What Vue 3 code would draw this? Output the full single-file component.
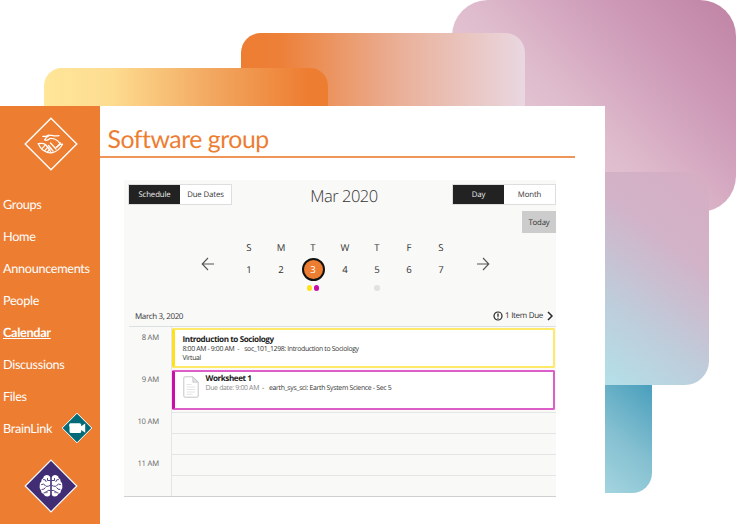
<script setup>
const navigation = [
  { label: 'Groups' },
  { label: 'Home' },
  { label: 'Announcements' },
  { label: 'People' },
  { label: 'Calendar', active: true },
  { label: 'Discussions' },
  { label: 'Files' },
  { label: 'BrainLink', video: true },
]

const week = [
  { name: 'S', date: 1 },
  { name: 'M', date: 2 },
  { name: 'T', date: 3, selected: true, dots: ['yellow', 'magenta'] },
  { name: 'W', date: 4 },
  { name: 'T', date: 5, dots: ['grey'] },
  { name: 'F', date: 6 },
  { name: 'S', date: 7 },
]

const hours = ['8 AM', '9 AM', '10 AM', '11 AM']
</script>

<template>
  <div class="scene">
    <div class="tile tile-pink"></div>
    <div class="tile tile-orange"></div>
    <div class="tile tile-yellow"></div>
    <div class="tile tile-teal"></div>
    <div class="tile tile-blue"></div>

    <div class="window">
      <aside class="sidebar">
        <svg class="logo" viewBox="0 0 54 54" width="54" height="54">
          <path d="M27 1.2 52.8 27 27 52.8 1.2 27Z" fill="none" stroke="#fff" stroke-width="1.4" />
          <g fill="none" stroke="#fff" stroke-width="1.25" stroke-linecap="round" stroke-linejoin="round">
            <path d="M18.8 19.3h3.4q2-1.3 4-1h1.6q3.5 1 7.2.3" />
            <path d="M25 18.7q-2.8 1-4.4 4.2 2.4 1.2 5.4-1.4 4.5-.4 8 2.6 1.8 1.7 2 3.3" />
            <path d="M14.3 26.7q1.5 3.5 4 6 5 3.6 9.5 3.1 6.8-1.4 10.8-8.6l-2.6.2-4 3" />
            <path d="M14.3 26.7q5-.7 7.2.8l3.2 4 2.3 4M26.5 26l5.5 6M24.5 28.5l4.5 5.5" />
            <path d="M18 31.7l3-3.4M20.7 33.7l3-3.3M23.4 35l2.6-3M33 30l3.5-4" />
          </g>
        </svg>

        <nav class="nav">
          <a v-for="item in navigation" :key="item.label" class="nav-item" :class="{ active: item.active }">
            <span>{{ item.label }}</span>
            <svg v-if="item.video" class="video" viewBox="0 0 32 32" width="32" height="32">
              <path d="M16 1.2 30.8 16 16 30.8 1.2 16Z" fill="#036b77" stroke="#fff" stroke-width="1" />
              <path d="M9.5 11.2H18.6q1.6 0 1.6 1.6V14.2l4-2.6v9.2L20.2 18v1.6q0 1.5-1.6 1.5H10q-1.5 0-1.5-1.5v-4.5q-1-2 0-3.3Z" fill="#fff" />
            </svg>
          </a>
        </nav>

        <svg class="brain" viewBox="0 0 54 54" width="54" height="54">
          <path d="M27 1.2 52.8 27 27 52.8 1.2 27Z" fill="#412d74" stroke="#fff" stroke-width="1.2" />
          <path d="M26.2 18q-1.5-2.5-4.5-1.8-2.4.6-2.4 2.7-2.3 1-2 3.7-2 1.5-1.6 4.2-.8 3 1.3 4.6 0 2.7 2.4 3.4 1.2 3 4.2 2.7 2.3 0 2.6-2Z" fill="#fff" />
          <path d="M27.8 18q1.5-2.5 4.5-1.8 2.4.6 2.4 2.7 2.3 1 2 3.7 2 1.5 1.6 4.2.8 3-1.3 4.6 0 2.7-2.4 3.4-1.2 3-4.2 2.7-2.3 0-2.6-2Z" fill="#fff" />
          <g fill="none" stroke="#412d74" stroke-width=".9" stroke-linecap="round">
            <path d="M19.5 20.5q2.5-.5 2.7 2M26 21.5h-2.5v-2M17.5 25.5q2.5-1.3 3.6.8t4.9.2M18 30.5q2.5.4 3.3-1.7M26 31.5q-3.3-1-3.2 2.3M20 34q2 .3 2.3-1.5" />
            <path d="M34.5 20.5q-2.5-.5-2.7 2M28 21.5h2.5v-2M36.5 25.5q-2.5-1.3-3.6.8t-4.9.2M36 30.5q-2.5.4-3.3-1.7M28 31.5q3.3-1 3.2 2.3M34 34q-2 .3-2.3-1.5" />
          </g>
        </svg>
      </aside>

      <main class="content">
        <h1 class="title">Software group</h1>

        <section class="calendar">
          <header class="toolbar">
            <div class="toggle">
              <button class="on">Schedule</button>
              <button>Due Dates</button>
            </div>
            <h2 class="month">Mar 2020</h2>
            <div class="toggle">
              <button class="on">Day</button>
              <button>Month</button>
            </div>
          </header>
          <button class="today">Today</button>

          <div class="week">
            <svg class="arrow" viewBox="0 0 14 14" width="14" height="14">
              <path d="M13 7H1.2M7 1 1.2 7 7 13" />
            </svg>
            <div class="days">
              <div v-for="day in week" :key="day.date" class="day">
                <span class="name">{{ day.name }}</span>
                <span class="date" :class="{ selected: day.selected }">{{ day.date }}</span>
                <span class="dots">
                  <i v-for="dot in day.dots" :key="dot" :class="dot"></i>
                </span>
              </div>
            </div>
            <svg class="arrow" viewBox="0 0 14 14" width="14" height="14">
              <path d="M1 7h11.8M7 1l5.8 6L7 13" />
            </svg>
          </div>

          <div class="summary">
            <span class="current">March 3, 2020</span>
            <span class="due">
              <svg viewBox="0 0 10 10" width="10" height="10">
                <circle cx="5" cy="5" r="4" fill="none" stroke="#262626" stroke-width="1.2" />
                <path d="M5 2.4v3.3M5 6.7v1" stroke="#262626" stroke-width="1.3" />
              </svg>
              <span class="due-text">1 Item Due</span>
              <svg viewBox="0 0 6 10" width="6" height="10">
                <path d="M1 1l4 4-4 4" fill="none" stroke="#262626" stroke-width="1.5" />
              </svg>
            </span>
          </div>

          <div class="schedule">
            <div class="hours">
              <div v-for="hour in hours" :key="hour" class="hour">{{ hour }}</div>
            </div>
            <div class="events">
              <article class="event sociology">
                <h3>Introduction to Sociology</h3>
                <p><span class="time">8:00 AM - 9:00 AM</span><span class="dash">-</span><span class="course">soc_101_1298: Introduction to Sociology</span></p>
                <p class="place">Virtual</p>
              </article>
              <article class="event worksheet">
                <svg class="paper" viewBox="0 0 16 22" width="16" height="22">
                  <path d="M.8 2q0-1.2 1.2-1.2h8L15.2 6v14q0 1.2-1.2 1.2H2Q.8 21.2.8 20Z" fill="#fff" stroke="#c6c6c6" />
                  <path d="M9.8 1v5.2h5.2Z" fill="#e4e4e4" stroke="#c6c6c6" stroke-width=".8" />
                  <path d="M3.5 8.5h5M3.5 11h8.5M3.5 13.5h8.5M3.5 16h8.5M3.5 18.3h6" stroke="#dedede" stroke-width=".8" />
                </svg>
                <div>
                  <h3>Worksheet 1</h3>
                  <p><span class="muted">Due date: 9:00 AM</span><span class="dash">-</span><span class="course">earth_sys_sci: Earth System Science - Sec 5</span></p>
                </div>
              </article>
              <div class="slot"></div>
              <div class="slot"></div>
              <div class="slot"></div>
              <div class="slot"></div>
            </div>
          </div>
        </section>
      </main>
    </div>
  </div>
</template>

<style>
body {
  background: #fff;
  overflow: hidden;
}
</style>

<style scoped>
* {
  box-sizing: border-box;
}

.scene {
  position: relative;
  width: 736px;
  height: 524px;
  padding-top: 106px;
  overflow: hidden;
  font-family: "Open Sans", "Noto Sans", sans-serif;
  text-rendering: geometricPrecision;
  color: #333;
}

h1, h2, h3, p {
  margin: 0;
}

button {
  margin: 0;
  padding: 0;
  border: 0;
  font-family: inherit;
  text-rendering: inherit;
}

/* Overlapping backdrop tiles */
.tile {
  position: absolute;
}

.tile-pink {
  left: 452px;
  top: 0;
  width: 284px;
  height: 212px;
  border-radius: 36px;
  background: linear-gradient(45deg, #edd5df 0%, #dfbccd 45%, #cd99b7 74%, #c083a4 100%);
}

.tile-orange {
  left: 241px;
  top: 33px;
  width: 284px;
  height: 100px;
  border-radius: 20px;
  background: linear-gradient(90deg, #ed7d31 0%, #ed8038 14%, #eab19a 57%, #e9d7e1 100%);
}

.tile-yellow {
  left: 44px;
  top: 68px;
  width: 284px;
  height: 80px;
  border-radius: 18px;
  background: linear-gradient(90deg, #ffe699 0%, #fddc90 24%, #f2a65f 60%, #ed7d31 93%);
}

.tile-teal {
  left: 600px;
  top: 380px;
  width: 51.5px;
  height: 113px;
  border-radius: 0 0 20px 0;
  background: linear-gradient(40deg, #a6d6e0 0%, #85c0d1 45%, #4ba0bd 95%);
}

.tile-blue {
  left: 600px;
  top: 172px;
  width: 108.5px;
  height: 213px;
  border-radius: 0 24px 24px 0;
  background: linear-gradient(38deg, #b2e1e9 0%, #bfccda 32%, #d2b3c8 66%, #d6adc3 100%);
}

.window {
  position: relative;
  display: flex;
  width: 605px;
  height: 418px;
  background: #fff;
}

/* Sidebar */
.sidebar {
  display: flex;
  flex-direction: column;
  width: 99.5px;
  padding-top: 11px;
  background: #ed7d31;
}

.logo,
.brain {
  display: block;
  flex: none;
  margin-left: 24px;
}

.nav {
  display: flex;
  flex-direction: column;
  height: 256px;
  margin-top: 17px;
  font-family: Lato, sans-serif;
  font-size: 12.7px;
  letter-spacing: -0.32px;
  color: #fff;
}

.nav-item {
  display: flex;
  flex: none;
  align-items: center;
  height: 32px;
  padding-left: 3px;
}

.active {
  font-weight: 700;
  text-decoration: underline;
}

.video {
  margin-left: 9px;
}

.brain {
  margin-top: 15px;
}

/* Main area */
.content {
  flex: 1;
  min-width: 0;
}

.title {
  width: 475.5px;
  height: 51.5px;
  padding: 18.5px 0 0 8px;
  border-bottom: 2px solid #f0955a;
  font-family: Lato, sans-serif;
  font-size: 24.8px;
  font-weight: 400;
  letter-spacing: -0.45px;
  line-height: 30px;
  color: #ed7d31;
}

.calendar {
  display: flex;
  flex-direction: column;
  width: 432px;
  height: 316.5px;
  margin: 22.5px 0 0 24.5px;
  padding-top: 3.5px;
  border-bottom: 1.5px solid #cfcfcf;
  background: #f9f9f8;
}

.toolbar {
  display: flex;
  align-items: center;
  justify-content: space-between;
  height: 21px;
  padding-left: 4px;
}

.toggle {
  display: flex;
  width: 104px;
  height: 21px;
  border: 1px solid #dedede;
}

.toggle button {
  flex: 1;
  padding-top: 1.5px;
  background: #fff;
  font-size: 7.8px;
  letter-spacing: -0.12px;
  color: #333;
}

.toggle .on {
  background: #222;
  color: #eee;
}

.month {
  padding-top: 4.5px;
  padding-left: 4px;
  font-size: 16.5px;
  font-weight: 300;
  letter-spacing: -0.5px;
  line-height: 22px;
  color: #333;
}

.today {
  align-self: flex-end;
  width: 34px;
  height: 22px;
  margin-top: 6.5px;
  padding-top: 1px;
  background: #ccc;
  font-size: 7.8px;
  letter-spacing: -0.15px;
  color: #333;
}

.week {
  display: flex;
  justify-content: center;
  height: 66px;
  margin-top: 6px;
  padding-left: 10px;
}

.arrow {
  flex: none;
  margin-top: 18px;
  fill: none;
  stroke: #555;
  stroke-width: 1.1;
}

.days {
  display: flex;
  margin: 0 18.5px;
}

.day {
  display: flex;
  flex-direction: column;
  align-items: center;
  width: 32px;
  font-size: 9.6px;
}

.name {
  height: 18px;
  line-height: 18px;
}

.date {
  display: flex;
  align-items: center;
  justify-content: center;
  width: 23px;
  height: 23px;
  margin-top: 1px;
  border: 2px solid transparent;
  border-radius: 50%;
}

.selected {
  border-color: #111;
  background: #ed7d31;
  color: #fff;
}

.dots {
  display: flex;
  gap: 1.5px;
  margin-top: 4px;
}

.dots i {
  width: 5.5px;
  height: 5.5px;
  border-radius: 50%;
}

.yellow {
  background: #ffe01f;
}

.magenta {
  background: #c90fa8;
}

.grey {
  background: #e2e2e2;
}

.summary {
  display: flex;
  align-items: center;
  justify-content: space-between;
  height: 21.5px;
  margin-left: 5px;
  padding: 1px 3px 0 6px;
  border-bottom: 1px solid #dcdfe0;
  font-size: 8px;
  letter-spacing: -0.36px;
}

.current {
  padding-top: 2px;
}

.due {
  display: flex;
  align-items: center;
}

.due-text {
  margin: 0 4px 0 2px;
  letter-spacing: -0.3px;
}

.schedule {
  display: flex;
  flex: 1;
  min-height: 0;
}

.hours {
  width: 47.5px;
  border-right: 1px solid #e4e5e5;
  font-size: 7.7px;
  letter-spacing: -0.2px;
  color: #666;
}

.hour {
  height: 42.2px;
  padding: 6px 11.5px 0 0;
  line-height: 11px;
  text-align: right;
}

.events {
  flex: 1;
  padding-top: 1px;
}

.event {
  height: 40px;
  margin: 0 1px 2px 0;
  border: 2px solid;
  border-left-width: 3.5px;
  border-radius: 2px;
  background: #fff;
  font-size: 6.9px;
  letter-spacing: -0.35px;
  line-height: 9.5px;
}

.event h3 {
  font-size: 8.1px;
  font-weight: 700;
  letter-spacing: -0.42px;
  line-height: 10px;
  color: #222;
}

.event p {
  white-space: nowrap;
}

.sociology {
  padding: 5px 0 0 8px;
  border-color: #ffea68;
  border-left-color: #ffe01f;
}

.worksheet {
  display: flex;
  gap: 7px;
  padding: 2.5px 0 0 8px;
  border-color: #dd5ec7;
  border-left-color: #c90fa8;
}

.paper {
  margin-top: 2px;
}

.worksheet p {
  letter-spacing: -0.31px;
}

.dash {
  margin: 0 5px 0 3px;
}

.muted {
  color: #888;
}

.slot {
  height: 21px;
  border-top: 1px solid #e4e5e5;
}
</style>
